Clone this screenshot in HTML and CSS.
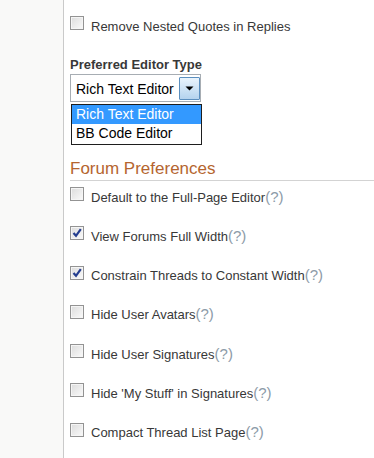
FILE: index.html
```html
<!DOCTYPE html>
<html lang="en">
<head>
    <meta charset="UTF-8">
    <meta name="viewport" content="width=device-width, initial-scale=1.0">
    <title>Forum Preferences</title>
    <link rel="stylesheet" href="styles.css">
</head>
<body>
    <div class="page">
        <div class="side"></div>
        <div class="main">
            <div class="opt">
                <span class="box"></span>
                <span class="label">Remove Nested Quotes in Replies</span>
            </div>

            <div class="field-label">Preferred Editor Type</div>
            <div class="select">
                <span class="select-value">Rich Text Editor</span>
                <span class="select-btn">
                    <svg width="9" height="5" viewBox="0 0 9 5"><path d="M0.5 0.5 H8.5 L4.5 4.5 Z" fill="#000"/></svg>
                </span>
                <ul class="select-menu">
                    <li class="active">Rich Text Editor</li>
                    <li>BB Code Editor</li>
                </ul>
            </div>

            <h2 class="section-title">Forum Preferences</h2>
            <div class="opts">
                <div class="opt">
                    <span class="box"></span>
                    <span class="label">Default to the Full-Page Editor<span class="help">(?)</span></span>
                </div>
                <div class="opt">
                    <span class="box checked"><svg width="12" height="12" viewBox="0 0 12 12"><path d="M2.5 6 L5 8.8 L9.8 2.2" fill="none" stroke="#243d8f" stroke-width="2.2"/></svg></span>
                    <span class="label">View Forums Full Width<span class="help">(?)</span></span>
                </div>
                <div class="opt">
                    <span class="box checked"><svg width="12" height="12" viewBox="0 0 12 12"><path d="M2.5 6 L5 8.8 L9.8 2.2" fill="none" stroke="#243d8f" stroke-width="2.2"/></svg></span>
                    <span class="label">Constrain Threads to Constant Width<span class="help">(?)</span></span>
                </div>
                <div class="opt">
                    <span class="box"></span>
                    <span class="label">Hide User Avatars<span class="help">(?)</span></span>
                </div>
                <div class="opt">
                    <span class="box"></span>
                    <span class="label">Hide User Signatures<span class="help">(?)</span></span>
                </div>
                <div class="opt">
                    <span class="box"></span>
                    <span class="label">Hide 'My Stuff' in Signatures<span class="help">(?)</span></span>
                </div>
                <div class="opt">
                    <span class="box"></span>
                    <span class="label">Compact Thread List Page<span class="help">(?)</span></span>
                </div>
            </div>
        </div>
    </div>
</body>
</html>
```

FILE: styles.css
```css
body {
    margin: 0;
    font-family: "Liberation Sans", Arial, sans-serif;
    font-size: 13px;
    color: #383838;
    background-color: #fff;
}
.page {
    display: flex;
    min-height: 458px;
}
.side {
    width: 63px;
    flex-shrink: 0;
    background-color: #f9f9f8;
    border-right: 1px solid #cacaca;
}
.main {
    flex: 1;
    padding: 16px 0 0 6px;
}
.opt {
    display: flex;
    align-items: flex-start;
    height: 14px;
}
.box {
    width: 14px;
    height: 14px;
    box-sizing: border-box;
    flex-shrink: 0;
    border: 1px solid #939393;
    box-shadow: inset 0 0 0 1px #f5f5f5;
    background: linear-gradient(135deg, #dcdcdc, #fafafa);
    display: flex;
    align-items: center;
    justify-content: center;
}
.label {
    margin: 2.5px 0 0 7px;
    line-height: 16px;
    white-space: nowrap;
}
.help {
    font-size: 15px;
    line-height: 0;
    color: #8d9ba8;
}
.field-label {
    margin-top: 27px;
    font-weight: bold;
    line-height: 16px;
}
.select {
    position: relative;
    margin-top: 1px;
    width: 131px;
    height: 28px;
    box-sizing: border-box;
    border: 1px solid #a7adb3;
    padding: 2px 0 0 5px;
    display: flex;
    align-items: flex-start;
    font-size: 14px;
    color: #000;
}
.select-value {
    flex: 1;
    line-height: 24px;
    white-space: nowrap;
}
.select-btn {
    width: 21px;
    height: 23px;
    box-sizing: border-box;
    border: 1px solid #5b8fbf;
    border-radius: 1px;
    background: linear-gradient(#eaf4fd, #b4d3ee);
    display: flex;
    align-items: center;
    justify-content: center;
}
.select-menu {
    position: absolute;
    top: 29px;
    left: 0;
    width: 131px;
    box-sizing: border-box;
    margin: 0;
    padding: 0 0 1px 0;
    list-style: none;
    border: 1px solid #1e1e1e;
    background-color: #fff;
}
.select-menu li {
    line-height: 19px;
    padding-left: 4px;
}
.select-menu li.active {
    background-color: #3399ff;
    color: #fff;
}
.section-title {
    margin: 57px 0 0 0;
    padding-bottom: 1px;
    border-bottom: 1px solid #d3d3d3;
    font-size: 17px;
    font-weight: normal;
    line-height: 20px;
    color: #b5652f;
}
.opts {
    display: flex;
    flex-direction: column;
    gap: 25.3px;
    padding-top: 6px;
}
```
